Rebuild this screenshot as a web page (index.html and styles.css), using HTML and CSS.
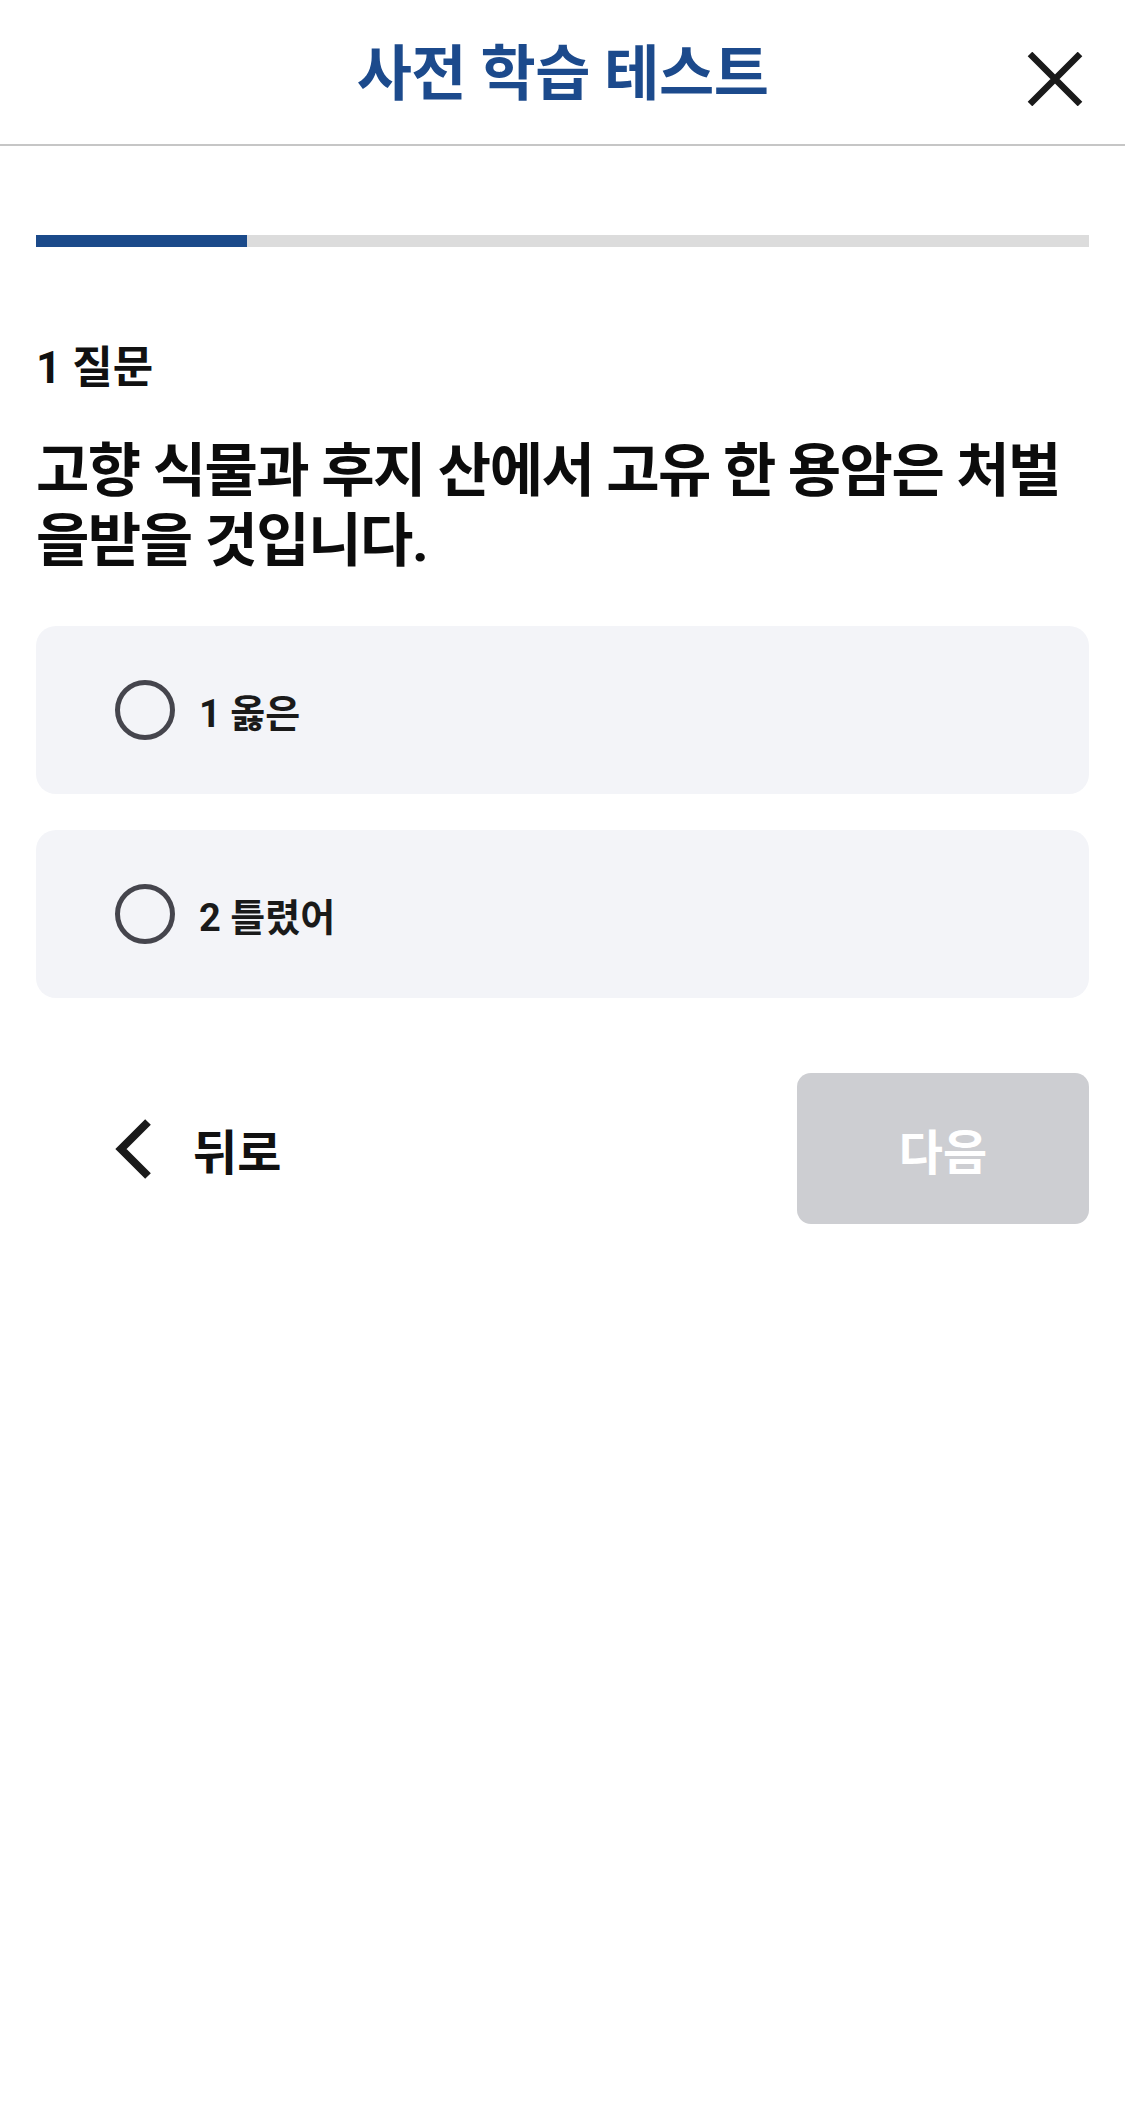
FILE: index.html
```html
<!DOCTYPE html>
<html lang="ko">
<head>
<meta charset="utf-8">
<title>사전 학습 테스트</title>
<link rel="stylesheet" href="styles.css">
</head>
<body>
<header class="topbar">
  <div class="topbar-side"></div>
  <h1 class="topbar-title">사전 학습 테스트</h1>
  <div class="topbar-side topbar-side--end">
    <button class="icon-btn" aria-label="닫기">
      <svg width="56" height="54" viewBox="0 0 56 54"><path d="M3 2 L53 52 M53 2 L3 52" stroke="#1a1a1a" stroke-width="6.5" fill="none"/></svg>
    </button>
  </div>
</header>

<main class="quiz">
  <div class="progress"><div class="progress-fill" style="width:20%"></div></div>

  <div class="q-label">1 질문</div>
  <p class="q-text">고향 식물과 후지 산에서 고유 한 용암은 처벌을받을 것입니다.</p>

  <ul class="options">
    <li class="option"><span class="radio"></span><span class="option-text">1 옳은</span></li>
    <li class="option"><span class="radio"></span><span class="option-text">2 틀렸어</span></li>
  </ul>

  <div class="nav">
    <button class="back-btn">
      <svg width="40" height="62" viewBox="0 0 40 62"><path d="M35 4 L8 31 L35 58" stroke="#1a1a1a" stroke-width="8" fill="none"/></svg>
      <span>뒤로</span>
    </button>
    <button class="next-btn" disabled>다음</button>
  </div>
</main>
</body>
</html>
```
FILE: styles.css
```css
* { box-sizing: border-box; }
html, body { margin: 0; padding: 0; background: #fff; }
body {
  width: 1125px;
  font-family: Roboto, "Noto Sans CJK KR", sans-serif;
  color: #111;
}
button { font: inherit; background: none; border: 0; padding: 0; cursor: pointer; }

.topbar {
  height: 146px;
  border-bottom: 2px solid #c6c6c6;
  display: grid;
  grid-template-columns: 1fr auto 1fr;
  align-items: center;
}
.topbar-title {
  margin: 0;
  font-size: 60px;
  font-weight: 700;
  color: #1c4a8c;
  letter-spacing: -0.5px;
  line-height: 1;
  padding-top: 6px;
}
.topbar-side--end { display: flex; justify-content: flex-end; padding-right: 42px; }
.icon-btn { display: flex; padding-top: 14px; }

.quiz { padding: 0 36px; }

.progress {
  margin-top: 89px;
  height: 12px;
  background: #dcdcdc;
}
.progress-fill { height: 100%; background: #1b4a8a; }

.q-label {
  margin-top: 91px;
  font-size: 44px;
  font-weight: 700;
  line-height: 60px;
  color: #111;
}
.q-text {
  margin: 38px 0 0;
  font-size: 58px;
  font-weight: 700;
  line-height: 70px;
  letter-spacing: -1.5px;
  color: #0c0c0c;
}

.options {
  list-style: none;
  margin: 50px 0 0;
  padding: 0;
  display: flex;
  flex-direction: column;
  gap: 36px;
}
.option {
  height: 168px;
  background: #f3f4f8;
  border-radius: 20px;
  display: flex;
  align-items: center;
  padding-left: 79px;
  gap: 24px;
}
.radio {
  width: 60px;
  height: 60px;
  border: 5px solid #45454d;
  border-radius: 50%;
  flex: none;
}
.option-text {
  font-size: 38px;
  font-weight: 700;
  color: #1a1a1a;
}

.nav {
  margin-top: 75px;
  display: flex;
  justify-content: space-between;
  align-items: center;
}
.back-btn {
  display: flex;
  align-items: center;
  gap: 40px;
  margin-left: 77px;
  font-size: 48px;
  font-weight: 700;
  color: #111;
}
.next-btn {
  width: 292px;
  height: 151px;
  border-radius: 14px;
  background: #cdced2;
  color: #fff;
  font-size: 48px;
  font-weight: 700;
}
```
